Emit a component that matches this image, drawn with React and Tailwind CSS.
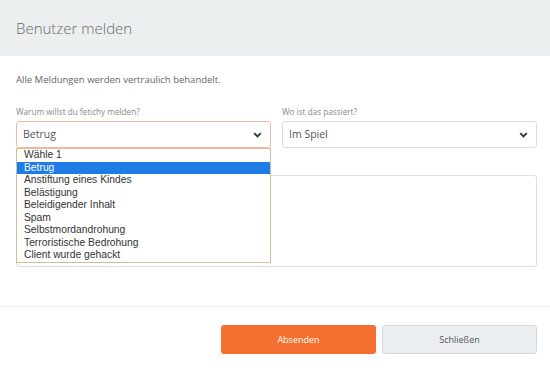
import React from "react";

const items = [
  "Wähle 1",
  "Betrug",
  "Anstiftung eines Kindes",
  "Belästigung",
  "Beleidigender Inhalt",
  "Spam",
  "Selbstmordandrohung",
  "Terroristische Bedrohung",
  "Client wurde gehackt",
];

function Chevron() {
  return (
    <svg width="9" height="6" viewBox="0 0 9 6" className="shrink-0">
      <path d="M1.2 1.2 L4.5 4.5 L7.8 1.2" fill="none" stroke="#333" strokeWidth="1.8" />
    </svg>
  );
}

export default function App() {
  return (
    <div className="w-[550px] h-[372px] bg-white font-['Open_Sans',sans-serif] overflow-hidden">
      <div className="h-[56px] bg-[#ebeff0] flex items-center px-4">
        <span className="text-[15px] text-[#6a6a6a] font-light">Benutzer melden</span>
      </div>
      <div className="pl-4 pr-[13px] pt-[17px]">
        <p className="text-[9.5px] leading-[14px] text-[#666]">Alle Meldungen werden vertraulich behandelt.</p>
        <div className="mt-[19px] grid grid-cols-2 gap-[11px]">
          <div className="relative">
            <div className="text-[8.2px] leading-[12px] text-[#888] mb-[3px]">Warum willst du fetichy melden?</div>
            <div className="h-[27px] rounded-[3px] border border-[#f3b9a2] flex items-center justify-between pl-[6px] pr-[8px]">
              <span className="text-[10.5px] text-[#555]">Betrug</span>
              <Chevron />
            </div>
            <div className="absolute left-0 top-[42px] w-full z-10 bg-white border border-[#d9bb97] font-['Liberation_Sans',Arial,sans-serif]">
              {items.map((it, i) => (
                <div
                  key={it}
                  className={
                    "h-[12.5px] leading-[12.5px] text-[10.3px] pl-[7px] " +
                    (i === 1 ? "bg-[#1e7ce8] text-white" : "text-[#333]")
                  }
                >
                  {it}
                </div>
              ))}
            </div>
          </div>
          <div>
            <div className="text-[8.2px] leading-[12px] text-[#888] mb-[3px]">Wo ist das passiert?</div>
            <div className="h-[27px] rounded-[3px] border border-[#dcdfe1] flex items-center justify-between pl-[6px] pr-[8px]">
              <span className="text-[10.5px] text-[#555]">Im Spiel</span>
              <Chevron />
            </div>
          </div>
        </div>
        <div className="mt-[27px] h-[92px] rounded-[3px] border border-[#dcdfe1]" />
      </div>
      <div className="mt-[39px] border-t border-[#eef0f1]" />
      <div className="flex justify-end gap-[6px] px-[13px] pt-[18px]">
        <button className="w-[155px] h-[29px] rounded-[3px] bg-[#f46f30] text-white text-[9px]">Absenden</button>
        <button className="w-[155px] h-[29px] rounded-[3px] bg-[#eceff1] border border-[#d5d9dc] text-[#555] text-[9px]">Schließen</button>
      </div>
    </div>
  );
}
